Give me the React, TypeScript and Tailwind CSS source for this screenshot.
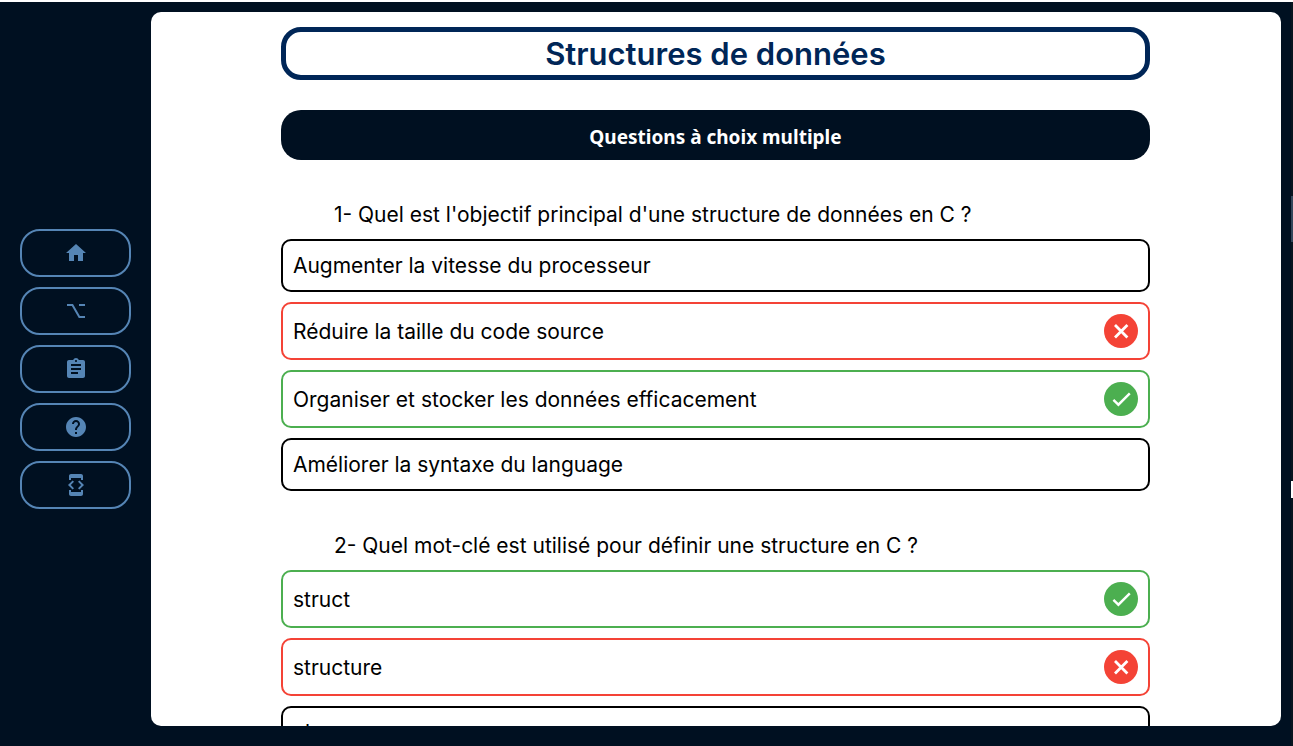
import React from "react";
import {
  MdAssignment,
  MdDeveloperMode,
  MdHelp,
  MdHome,
  MdKeyboardOptionKey,
} from "react-icons/md";

type Status = "neutral" | "wrong" | "right";

const navItems = [
  { label: "Accueil", Icon: MdHome },
  { label: "Chapitres", Icon: MdKeyboardOptionKey },
  { label: "Exercices", Icon: MdAssignment },
  { label: "Quiz", Icon: MdHelp },
  { label: "Compilateur", Icon: MdDeveloperMode },
];

const questions: { text: string; options: { text: string; status: Status }[] }[] = [
  {
    text: "1- Quel est l'objectif principal d'une structure de données en C ?",
    options: [
      { text: "Augmenter la vitesse du processeur", status: "neutral" },
      { text: "Réduire la taille du code source", status: "wrong" },
      { text: "Organiser et stocker les données efficacement", status: "right" },
      { text: "Améliorer la syntaxe du language", status: "neutral" },
    ],
  },
  {
    text: "2- Quel mot-clé est utilisé pour définir une structure en C ?",
    options: [
      { text: "struct", status: "right" },
      { text: "structure", status: "wrong" },
      { text: "class", status: "neutral" },
    ],
  },
];

const borders: Record<Status, string> = {
  neutral: "border-black",
  wrong: "border-[#f44336]",
  right: "border-[#4caf50]",
};

function StatusIcon({ status }: { status: Status }) {
  if (status === "neutral") return null;
  const wrong = status === "wrong";
  return (
    <svg
      viewBox="0 0 34 34"
      className="size-[34px] shrink-0"
      role="img"
      aria-label={wrong ? "Incorrect" : "Correct"}
    >
      <circle cx="17" cy="17" r="17" fill={wrong ? "#f44336" : "#4caf50"} />
      <path
        d={wrong ? "M11 11 L23.4 23.4 M23.4 11 L11 23.4" : "M9.4 17.9 L14.4 22.7 L25.8 11.4"}
        fill="none"
        stroke="#fff"
        strokeWidth={wrong ? 2.8 : 2.4}
      />
    </svg>
  );
}

function Option({ text, status }: { text: string; status: Status }) {
  return (
    <button
      type="button"
      className={`flex w-full items-center justify-between rounded-[10px] border-2 p-[10px] text-left ${borders[status]}`}
    >
      <span className="leading-[29px]">{text}</span>
      <StatusIcon status={status} />
    </button>
  );
}

export default function App() {
  return (
    <div className="flex h-screen border-t-2 border-white bg-[#001021] font-['Inter',sans-serif] text-black">
      <nav className="flex w-[151px] shrink-0 flex-col justify-center gap-[10px] px-5 pb-2.5">
        {navItems.map(({ label, Icon }) => (
          <a
            key={label}
            href="#"
            aria-label={label}
            className="flex h-12 items-center justify-center rounded-[20px] border-2 border-[#5585b5] text-[#5585b5]"
          >
            <Icon size={24} />
          </a>
        ))}
      </nav>
      <main className="mt-2.5 mr-2.5 mb-5 min-w-0 flex-1 overflow-hidden rounded-[10px] bg-white">
        <div className="ml-[11.5%] w-[76.9%] pt-[15px] text-[21px]">
          <h1 className="rounded-[20px] border-[5px] border-[#002657] text-center text-[31px] leading-[43px] font-semibold text-[#002657]">
            Structures de données
          </h1>
          <h2 className="mt-[30px] rounded-[20px] bg-[#001021] pt-3 pb-2 text-center font-['Noto_Sans',sans-serif] text-[19px] leading-[30px] font-bold text-white">
            Questions à choix multiple
          </h2>
          {questions.map((question) => (
            <section key={question.text} className="pt-10">
              <h3 className="mb-[10px] px-[53px] leading-[29px]">{question.text}</h3>
              <div className="flex flex-col gap-[10px]">
                {question.options.map((option) => (
                  <Option key={option.text} {...option} />
                ))}
              </div>
            </section>
          ))}
        </div>
      </main>
      <div aria-hidden="true" className="flex w-[2px] shrink-0 flex-col bg-[#08151f] pt-[194px]">
        <div className="h-[46px] bg-[#33475a]" />
        <div className="mt-[239px] h-[17px] bg-white" />
      </div>
    </div>
  );
}
